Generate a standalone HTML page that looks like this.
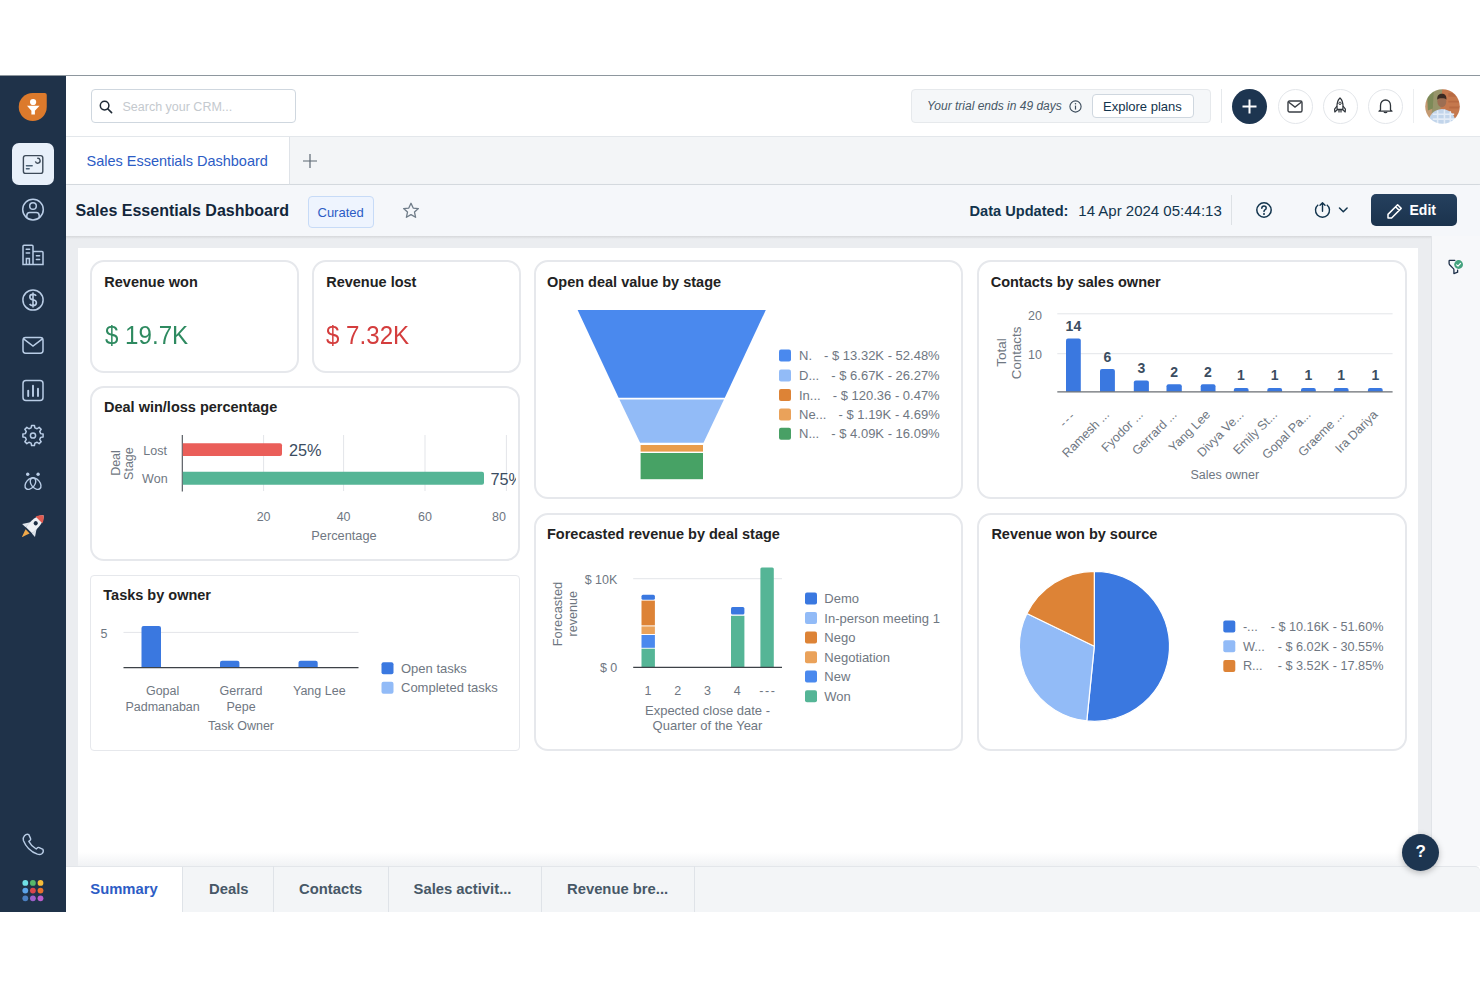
<!DOCTYPE html>
<html><head><meta charset="utf-8">
<style>
*{box-sizing:border-box;margin:0;padding:0}
html,body{width:1480px;height:987px;overflow:hidden;background:#fff;font-family:"Liberation Sans",sans-serif;color:#12344d}
.a{position:absolute}
.t{position:absolute;white-space:nowrap;line-height:1}
.card{position:absolute;border:2px solid #e6e8ec;border-radius:14px;background:#fff}
.ct{position:absolute;font-size:14.5px;font-weight:700;color:#222;line-height:1;white-space:nowrap}
svg{position:absolute;overflow:visible}
</style></head><body>
<!-- top line -->
<div class="a" style="left:0;top:75px;width:1480px;height:1px;background:#8e979e"></div>
<!-- sidebar -->
<div class="a" style="left:0;top:76px;width:66px;height:836px;background:#1f3249"></div>
<!-- header -->
<div class="a" style="left:66px;top:76px;width:1414px;height:61px;background:#fff;border-bottom:1px solid #e3e7eb"></div>
<!-- tab row -->
<div class="a" style="left:66px;top:137px;width:1414px;height:48px;background:#f3f5f7;border-bottom:1px solid #d9dee3"></div>
<div class="a" style="left:66px;top:137px;width:224px;height:48px;background:#fff;border-right:1px solid #dfe3e8;border-bottom:1px solid #d9dee3"></div>
<!-- title row -->
<div class="a" style="left:66px;top:185px;width:1414px;height:51px;background:#f5f7fa;box-shadow:0 1px 3px rgba(0,0,0,.12)"></div>
<!-- content gray -->
<div class="a" style="left:66px;top:236px;width:1365px;height:630px;background:#ebedf0"></div>
<div class="a" style="left:66px;top:236px;width:1414px;height:3px;background:linear-gradient(rgba(0,0,0,.09),rgba(0,0,0,0))"></div>
<!-- white panel -->
<div class="a" style="left:78px;top:248px;width:1340px;height:618px;background:#fff"></div>
<div class="a" style="left:78px;top:852px;width:1340px;height:14px;background:linear-gradient(rgba(236,238,241,0),rgba(236,238,241,.75))"></div>
<!-- right panel -->
<div class="a" style="left:1431px;top:236px;width:49px;height:630px;background:#f7f8fa;border-left:1px solid #e1e4e8"></div>
<!-- bottom tabs -->
<div class="a" style="left:66px;top:866px;width:1414px;height:46px;background:#f3f5f7;border-top:1px solid #e3e6ea;border-top-right-radius:5px"></div>

<!-- ===== HEADER CONTENT ===== -->
<div class="a" style="left:91px;top:89px;width:205px;height:34px;border:1px solid #cfd7df;border-radius:4px;background:#fff"></div>
<svg style="left:99px;top:100px" width="14" height="14" viewBox="0 0 14 14"><circle cx="5.6" cy="5.6" r="4.3" fill="none" stroke="#1f2a36" stroke-width="1.5"/><line x1="8.7" y1="8.7" x2="12.6" y2="12.6" stroke="#1f2a36" stroke-width="1.6" stroke-linecap="round"/></svg>
<div class="t" style="left:122.5px;top:101px;font-size:12.5px;color:#c4c9ce">Search your CRM...</div>

<div class="a" style="left:911px;top:89px;width:300px;height:34px;border:1px solid #e6e9ec;border-radius:4px;background:#f5f7f9"></div>
<div class="t" style="left:927px;top:100px;font-size:12px;font-style:italic;color:#475867">Your trial ends in 49 days</div>
<svg style="left:1069px;top:100px" width="13" height="13" viewBox="0 0 13 13"><circle cx="6.5" cy="6.5" r="5.6" fill="none" stroke="#3b4b5b" stroke-width="1.1"/><line x1="6.5" y1="5.6" x2="6.5" y2="9.6" stroke="#3b4b5b" stroke-width="1.2"/><circle cx="6.5" cy="3.7" r=".75" fill="#3b4b5b"/></svg>
<div class="a" style="left:1092px;top:94px;width:102px;height:24px;border:1px solid #cfd7df;border-radius:4px;background:#fff"></div>
<div class="t" style="left:1103px;top:100px;font-size:13px;color:#12344d">Explore plans</div>
<div class="a" style="left:1221px;top:89px;width:1px;height:34px;background:#e6e9ec"></div>

<div class="a" style="left:1232px;top:88.5px;width:35px;height:35px;border-radius:50%;background:#1d3550"></div>
<svg style="left:1242px;top:98.5px" width="15" height="15" viewBox="0 0 15 15"><path d="M7.5 0.5V14.5M0.5 7.5H14.5" stroke="#fff" stroke-width="2"/></svg>
<div class="a" style="left:1277.5px;top:88.5px;width:35px;height:35px;border-radius:50%;background:#fff;border:1px solid #e3e6ea"></div>
<svg style="left:1287px;top:100px" width="16" height="13" viewBox="0 0 16 13"><rect x="1" y="1" width="14" height="11" rx="1.5" fill="none" stroke="#3a3f45" stroke-width="1.4"/><path d="M1.5 2L8 7L14.5 2" fill="none" stroke="#3a3f45" stroke-width="1.4"/></svg>
<div class="a" style="left:1322.5px;top:88.5px;width:35px;height:35px;border-radius:50%;background:#fff;border:1px solid #e3e6ea"></div>
<svg style="left:1332px;top:97px" width="16" height="17" viewBox="0 0 16 17"><path d="M8 1C5.6 3 4.8 6 5 10.5L5.2 12.5H10.8L11 10.5C11.2 6 10.4 3 8 1Z" fill="none" stroke="#2f353b" stroke-width="1.3" stroke-linejoin="round"/><circle cx="8" cy="6.3" r="1.2" fill="none" stroke="#2f353b" stroke-width="1"/><path d="M5 9L2.6 12.2L2.8 15L5.4 12.6M11 9L13.4 12.2L13.2 15L10.6 12.6M7 13V15.5M9 13V15.5" fill="none" stroke="#2f353b" stroke-width="1.2" stroke-linejoin="round"/></svg>
<div class="a" style="left:1368px;top:88.5px;width:35px;height:35px;border-radius:50%;background:#fff;border:1px solid #e3e6ea"></div>
<svg style="left:1377px;top:98px" width="17" height="16" viewBox="0 0 17 16"><path d="M3.5 12V7.5C3.5 4.3 5.6 2 8.5 2C11.4 2 13.5 4.3 13.5 7.5V12L15 13.2H2L3.5 12Z" fill="none" stroke="#2f353b" stroke-width="1.3" stroke-linejoin="round"/><path d="M7 13.8C7.3 14.8 9.7 14.8 10 13.8" fill="none" stroke="#2f353b" stroke-width="1.2"/></svg>
<div class="a" style="left:1413px;top:89px;width:1px;height:34px;background:#eceef0"></div>
<svg style="left:1424.5px;top:88.7px" width="35" height="35" viewBox="0 0 36 36"><defs><clipPath id="av"><circle cx="18" cy="18" r="17.8"/></clipPath><filter id="avb" x="-10%" y="-10%" width="120%" height="120%"><feGaussianBlur stdDeviation="0.7"/></filter></defs><g clip-path="url(#av)"><g filter="url(#avb)"><rect x="-2" y="-2" width="40" height="40" fill="#c5784d"/><path d="M-2 -2H18L16 20L-2 30Z" fill="#97946a"/><path d="M-2 10H8L6 36H-2Z" fill="#c49a72"/><path d="M2 4L9 2L8 20L3 22Z" fill="#7d8a58"/><path d="M24 4H38V8H24ZM24 12H38V14H24ZM25 18H38V20H25Z" fill="#b86a42"/><ellipse cx="17.3" cy="12.6" rx="4.6" ry="6.2" fill="#9c6e52"/><path d="M12.6 11C12.4 6.6 14.6 5 17.4 5C20.4 5 22.4 6.8 22 11C21 9 14 9 12.6 11Z" fill="#3b2a22"/><path d="M3 38C4 26 8 21.5 17.5 20.5C27 21.5 31 26 32 38Z" fill="#c2d5eb"/><path d="M8 26H30M8 31H31M13 22V36M20 21V36M26 23V36" stroke="#e3ecf7" stroke-width="1.6"/></g></g></svg>

<!-- ===== SIDEBAR ICONS ===== -->
<svg style="left:0;top:76px" width="66" height="836" viewBox="0 76 66 836">
 <!-- logo -->
 <path d="M32.75 93H44.75Q46.75 93 46.75 95V107A14 14 0 1 1 32.75 93Z" fill="#dc7a2c"/>
 <circle cx="33.1" cy="102" r="3.1" fill="#fff"/>
 <path d="M27 105.8H39.6L34.9 110.8V114.5H31.4V110.8Z" fill="#fff"/>
 <!-- active item -->
 <rect x="12" y="143" width="42" height="42" rx="7" fill="#e8f0fa"/>
 <rect x="23.4" y="155.6" width="19.4" height="17.8" rx="2.2" fill="none" stroke="#3d4a59" stroke-width="1.4"/>
 <path d="M26.4 165.8H32.2M26.4 168.8H29.2" stroke="#4a6075" stroke-width="1.4" stroke-linecap="round"/>
 <path d="M35.4 161.4A2.4 2.4 0 1 0 37.2 158.4" fill="none" stroke="#3d4a59" stroke-width="1.4"/>
 <g fill="none" stroke="#b9cde6" stroke-width="1.5">
 <!-- contacts -->
 <circle cx="33" cy="209.6" r="10.3"/>
 <circle cx="33" cy="206" r="3.3"/>
 <path d="M26.8 217.2V215.8Q26.8 212.6 29.8 212.6H36.2Q39.2 212.6 39.2 215.8V217.2"/>
 <!-- building -->
 <path d="M23 264.4V246.2Q23 245.2 24 245.2H32Q33 245.2 33 246.2V264.4ZM33 251.6H42Q43 251.6 43 252.6V264.4H22.6"/>
 <path d="M26.2 249.2H29.6M26.2 253H29.6M36.4 255.8H39.6M36.4 259.6H39.6" stroke-linecap="round"/>
 <path d="M26.4 264.4V258.4H29.4V264.4"/>
 <!-- dollar -->
 <circle cx="33" cy="300" r="10.1"/>
 <path d="M36.2 295.8Q35.2 294.4 33 294.4Q29.8 294.4 29.8 296.9Q29.8 299.2 33 299.7Q36.4 300.3 36.4 302.8Q36.4 305.6 33 305.6Q30.6 305.6 29.6 304M33 292.6V307.4" stroke-width="1.6"/>
 <!-- mail -->
 <rect x="23" y="337.6" width="20" height="15.6" rx="2.6"/>
 <path d="M23.6 338.8L33 346L42.4 338.8"/>
 <!-- report -->
 <rect x="23" y="380.5" width="20" height="20" rx="3"/>
 <path d="M28.2 396V390.6M33 396V385.8M38 396V388.8" stroke-width="1.9" stroke-linecap="round"/>
 <!-- gear -->
 <path d="M31.12 427.83 L31.58 425.40 L34.42 425.40 L34.88 427.83 L37.10 428.75 L39.14 427.35 L41.15 429.36 L39.75 431.40 L40.67 433.62 L43.10 434.08 L43.10 436.92 L40.67 437.38 L39.75 439.60 L41.15 441.64 L39.14 443.65 L37.10 442.25 L34.88 443.17 L34.42 445.60 L31.58 445.60 L31.12 443.17 L28.90 442.25 L26.86 443.65 L24.85 441.64 L26.25 439.60 L25.33 437.38 L22.90 436.92 L22.90 434.08 L25.33 433.62 L26.25 431.40 L24.85 429.36 L26.86 427.35 L28.90 428.75Z" stroke-linejoin="round" stroke-width="1.5"/>
 <circle cx="33" cy="435.5" r="2.6"/>
 <!-- freddy -->
 <ellipse cx="30.4" cy="483.6" rx="4.3" ry="6.6" transform="rotate(40 30.4 483.6)" stroke-width="1.4"/>
 <ellipse cx="35.6" cy="483.6" rx="4.3" ry="6.6" transform="rotate(-40 35.6 483.6)" stroke-width="1.4"/>
 </g>
 <circle cx="27.7" cy="474.2" r="1.7" fill="#b9cde6"/>
 <circle cx="38.1" cy="474.2" r="1.7" fill="#b9cde6"/>
 <!-- rocket -->
 <g transform="translate(33.5 525.5) rotate(45) scale(1.3)">
  <path d="M0 -11C3.6 -8 4 -2 3.4 5H-3.4C-4 -2 -3.6 -8 0 -11Z" fill="#eef1f5"/>
  <path d="M0 -11C2.4 -9 3.2 -7.4 3.6 -6H-3.6C-3.2 -7.4 -2.4 -9 0 -11Z" fill="#e05a50"/>
  <circle cx="0" cy="-2.4" r="1.6" fill="#1e2f45"/>
  <path d="M-3.4 0L-7 5.4L-3.4 5.2ZM3.4 0L7 5.4L3.4 5.2Z" fill="#dde3ea"/>
  <path d="M-2.2 6.4Q0 12.6 0 12.6Q0 12.6 2.2 6.4Z" fill="#f0a94a"/>
 </g>
 <!-- phone -->
 <path d="M24.5 835.8Q26.5 833.6 28.8 834.6L30.6 838.6Q31 839.8 29.8 840.6L28.8 841.4Q31.4 846.4 36.2 849L37.2 848Q38 847 39.2 847.6L43 849.4Q44 851.8 41.8 853.8Q40.2 855 37.4 854.2Q27.4 850.4 23.4 840.4Q22.8 837.6 24.5 835.8Z" fill="none" stroke="#b9cde6" stroke-width="1.4" stroke-linejoin="round"/>
 <!-- apps -->
 <circle cx="25.3" cy="882.9" r="2.9" fill="#6fe0e8"/><circle cx="32.9" cy="882.9" r="2.9" fill="#58b86a"/><circle cx="40.5" cy="882.9" r="2.9" fill="#f5bd3a"/>
 <circle cx="25.3" cy="890.6" r="2.9" fill="#5ca4ea"/><circle cx="32.9" cy="890.6" r="2.9" fill="#d9464c"/><circle cx="40.5" cy="890.6" r="2.9" fill="#e9712d"/>
 <circle cx="25.3" cy="898.3" r="2.9" fill="#4b80c2"/><circle cx="32.9" cy="898.3" r="2.9" fill="#9c60ca"/><circle cx="40.5" cy="898.3" r="2.9" fill="#bb5ecb"/>
</svg>

<!-- ===== CARDS ===== -->
<div class="card" style="left:90px;top:260px;width:208.5px;height:112.5px"></div>
<div class="card" style="left:312px;top:260px;width:208.5px;height:112.5px"></div>
<div class="card" style="left:90px;top:386px;width:430px;height:174.5px"></div>
<div class="card" style="left:90px;top:574.5px;width:430px;height:176px;border-radius:4px;border-width:1.5px"></div>
<div class="card" style="left:533.5px;top:260px;width:429px;height:238.5px"></div>
<div class="card" style="left:533.5px;top:512.5px;width:429px;height:238px"></div>
<div class="card" style="left:977px;top:260px;width:429.5px;height:238.5px"></div>
<div class="card" style="left:977px;top:512.5px;width:429.5px;height:238px"></div>

<div class="ct" style="left:104.3px;top:274.6px">Revenue won</div>
<div class="ct" style="left:326.2px;top:274.6px">Revenue lost</div>
<div class="ct" style="left:104px;top:400.2px">Deal win/loss percentage</div>
<div class="ct" style="left:103.3px;top:588px">Tasks by owner</div>
<div class="ct" style="left:547px;top:274.8px">Open deal value by stage</div>
<div class="ct" style="left:990.7px;top:274.9px">Contacts by sales owner</div>
<div class="ct" style="left:547px;top:526.8px">Forecasted revenue by deal stage</div>
<div class="ct" style="left:991.4px;top:526.6px">Revenue won by source</div>

<div class="t" style="left:104.6px;top:322px;font-size:26.5px;color:#2e8a60;transform:scaleX(0.91);transform-origin:0 0">$ 19.7K</div>
<div class="t" style="left:326.4px;top:322px;font-size:26.5px;color:#d43d3d;transform:scaleX(0.91);transform-origin:0 0">$ 7.32K</div>

<!-- ===== CHARTS ===== -->
<svg style="left:0;top:0" width="1480" height="987" viewBox="0 0 1480 987" font-family="Liberation Sans, sans-serif">
<defs><clipPath id="c1"><rect x="92" y="388" width="424" height="170"/></clipPath></defs>
<!-- Deal win/loss -->
<g fill="#6f7782" font-size="12.5">
 <text transform="translate(120 463) rotate(-90)" text-anchor="middle">Deal</text>
 <text transform="translate(132.5 463.6) rotate(-90)" text-anchor="middle">Stage</text>
 <text x="167" y="454.5" text-anchor="end">Lost</text>
 <text x="167.6" y="483.3" text-anchor="end">Won</text>
 <text x="263.6" y="520.5" text-anchor="middle">20</text>
 <text x="343.6" y="520.5" text-anchor="middle">40</text>
 <text x="425" y="520.5" text-anchor="middle">60</text>
 <text x="506" y="520.5" text-anchor="end">80</text>
 <text x="344" y="539.8" text-anchor="middle" font-size="12.8">Percentage</text>
</g>
<g stroke="#e3e5e9" stroke-width="1">
 <line x1="263.6" y1="435" x2="263.6" y2="491"/><line x1="343.6" y1="435" x2="343.6" y2="491"/><line x1="425" y1="435" x2="425" y2="491"/><line x1="506.4" y1="435" x2="506.4" y2="491"/>
</g>
<line x1="182.3" y1="435" x2="182.3" y2="491.5" stroke="#4a4f55" stroke-width="1.1"/>
<path d="M182.8 443.3H280Q282 443.3 282 445.3V454Q282 456 280 456H182.8Z" fill="#ea5e59"/>
<path d="M182.8 471.7H482Q484 471.7 484 473.7V482.8Q484 484.8 482 484.8H182.8Z" fill="#55b596"/>
<g clip-path="url(#c1)" fill="#3b4d61" font-size="16.3">
 <text x="289" y="455.8">25%</text>
 <text x="490.4" y="484.6">75%</text>
</g>

<!-- Tasks by owner -->
<g fill="#6f7782" font-size="12.5">
 <text x="107.5" y="637.5" text-anchor="end">5</text>
 <text x="162.6" y="695" text-anchor="middle">Gopal</text>
 <text x="162.6" y="710.5" text-anchor="middle">Padmanaban</text>
 <text x="241" y="695" text-anchor="middle">Gerrard</text>
 <text x="241" y="710.5" text-anchor="middle">Pepe</text>
 <text x="319.3" y="695" text-anchor="middle">Yang Lee</text>
 <text x="241" y="730.2" text-anchor="middle">Task Owner</text>
 <text x="401" y="672.6" font-size="13">Open tasks</text>
 <text x="401" y="692.2" font-size="13">Completed tasks</text>
</g>
<line x1="123.5" y1="632.4" x2="358.5" y2="632.4" stroke="#e3e5e9" stroke-width="1"/>
<g fill="#3a78e0">
 <path d="M141.5 667.6V628Q141.5 625.9 143.6 625.9H158.9Q161 625.9 161 628V667.6Z"/>
 <path d="M220 667.6V662.8Q220 660.7 222.1 660.7H237.3Q239.4 660.7 239.4 662.8V667.6Z"/>
 <path d="M298.5 667.6V662.8Q298.5 660.7 300.6 660.7H315.6Q317.7 660.7 317.7 662.8V667.6Z"/>
</g>
<line x1="123.5" y1="667.6" x2="358.5" y2="667.6" stroke="#3d4247" stroke-width="1.3"/>
<rect x="381.5" y="662.2" width="12" height="12" rx="2" fill="#3a78e0"/>
<rect x="381.5" y="681.8" width="12" height="12" rx="2" fill="#92bbf7"/>

<!-- Open deal value funnel -->
<path d="M577.6 310H765.8L724.8 397.8H618.6Z" fill="#4a89ee"/>
<path d="M619.4 399.6H724L703.5 442.8H640.1Z" fill="#92bbf7"/>
<rect x="640.6" y="445" width="62.4" height="6.6" fill="#e99d4c"/>
<rect x="640.6" y="453" width="62.4" height="26.2" fill="#47a265"/>
<rect x="779" y="349.5" width="12" height="12" rx="2" fill="#4a89ee"/>
<rect x="779" y="369.5" width="12" height="12" rx="2" fill="#92bbf7"/>
<rect x="779" y="389" width="12" height="12" rx="2" fill="#dd8336"/>
<rect x="779" y="408.4" width="12" height="12" rx="2" fill="#eaa25a"/>
<rect x="779" y="427.7" width="12" height="12" rx="2" fill="#48a065"/>
<g fill="#6f7782" font-size="13">
 <text x="799" y="360">N.</text><text x="939.7" y="360" text-anchor="end">- $ 13.32K - 52.48%</text>
 <text x="799" y="380">D...</text><text x="939.7" y="380" text-anchor="end">- $ 6.67K - 26.27%</text>
 <text x="799" y="399.5">In...</text><text x="939.7" y="399.5" text-anchor="end">- $ 120.36 - 0.47%</text>
 <text x="799" y="418.9">Ne...</text><text x="939.7" y="418.9" text-anchor="end">- $ 1.19K - 4.69%</text>
 <text x="799" y="438.2">N...</text><text x="939.7" y="438.2" text-anchor="end">- $ 4.09K - 16.09%</text>
</g>

<!-- Contacts by sales owner -->
<g stroke="#e3e5e9" stroke-width="1">
 <line x1="1057.3" y1="313.8" x2="1392.6" y2="313.8"/><line x1="1057.3" y1="353.7" x2="1392.6" y2="353.7"/>
</g>
<g fill="#3a78e0">
 <path d="M1066 391.8V340.6Q1066 338.6 1068 338.6H1078.8Q1080.8 338.6 1080.8 340.6V391.8Z"/>
 <path d="M1100 391.8V371Q1100 369 1102 369H1112.9Q1114.9 369 1114.9 371V391.8Z"/>
 <path d="M1133.8 391.8V382.4Q1133.8 380.4 1135.8 380.4H1146.9Q1148.9 380.4 1148.9 382.4V391.8Z"/>
 <path d="M1166.5 391.8V386.2Q1166.5 384.2 1168.5 384.2H1179.8Q1181.8 384.2 1181.8 386.2V391.8Z"/>
 <path d="M1200.7 391.8V386.2Q1200.7 384.2 1202.7 384.2H1213.5Q1215.5 384.2 1215.5 386.2V391.8Z"/>
 <path d="M1233.8 391.8V390Q1233.8 388 1235.8 388H1246.6Q1248.6 388 1248.6 390V391.8Z"/>
 <path d="M1267.3 391.8V390Q1267.3 388 1269.3 388H1280.1Q1282.1 388 1282.1 390V391.8Z"/>
 <path d="M1301 391.8V390Q1301 388 1303 388H1313.8Q1315.8 388 1315.8 390V391.8Z"/>
 <path d="M1333.8 391.8V390Q1333.8 388 1335.8 388H1346.6Q1348.6 388 1348.6 390V391.8Z"/>
 <path d="M1367.9 391.8V390Q1367.9 388 1369.9 388H1380.7Q1382.7 388 1382.7 390V391.8Z"/>
</g>
<line x1="1057.3" y1="391.8" x2="1392.6" y2="391.8" stroke="#6a6e73" stroke-width="1.3"/>
<g fill="#3b4d61" font-size="14" font-weight="700" text-anchor="middle">
 <text x="1073.4" y="331.1">14</text><text x="1107.3" y="361.5">6</text><text x="1141.3" y="373.1">3</text>
 <text x="1174.1" y="377.3">2</text><text x="1208" y="377.3">2</text><text x="1240.9" y="380.4">1</text>
 <text x="1274.7" y="380.4">1</text><text x="1308.4" y="380.4">1</text><text x="1341.2" y="380.4">1</text><text x="1375.3" y="380.4">1</text>
</g>
<g fill="#6f7782" font-size="12.5">
 <text x="1042" y="319.9" text-anchor="end">20</text>
 <text x="1042" y="358.8" text-anchor="end">10</text>
 <text transform="translate(1006 352.5) rotate(-90)" text-anchor="middle" font-size="13.5">Total</text>
 <text transform="translate(1021 352.9) rotate(-90)" text-anchor="middle" font-size="13.3">Contacts</text>
 <text x="1224.8" y="478.5" text-anchor="middle">Sales owner</text>
 <g text-anchor="end">
 <text transform="translate(1076.5 415.8) rotate(-45)" letter-spacing="1.6">---</text>
 <text transform="translate(1110 415.4) rotate(-45)">Ramesh ...</text>
 <text transform="translate(1143.8 415.4) rotate(-45)">Fyodor ...</text>
 <text transform="translate(1177.5 415.4) rotate(-45)">Gerrard ...</text>
 <text transform="translate(1211 415.4) rotate(-45)">Yang Lee</text>
 <text transform="translate(1244.5 415.4) rotate(-45)">Divya Ve...</text>
 <text transform="translate(1278 415.4) rotate(-45)">Emily St...</text>
 <text transform="translate(1311.5 415.4) rotate(-45)">Gopal Pa...</text>
 <text transform="translate(1345 415.4) rotate(-45)">Graeme ...</text>
 <text transform="translate(1378.5 415.4) rotate(-45)">Ira Dariya</text>
 </g>
</g>

<!-- Forecasted revenue -->
<line x1="633.2" y1="578.7" x2="782" y2="578.7" stroke="#e3e5e9" stroke-width="1"/>
<rect x="641.5" y="594.8" width="13.4" height="5" rx="1.5" fill="#3a78e0"/>
<rect x="641.5" y="600.6" width="13.4" height="24.8" fill="#dd8336"/>
<rect x="641.5" y="626.4" width="13.4" height="7.6" fill="#eaa25a"/>
<rect x="641.5" y="635" width="13.4" height="12.8" fill="#4a89ee"/>
<rect x="641.5" y="648.7" width="13.4" height="19" fill="#55b596"/>
<rect x="731" y="607" width="13.4" height="7.6" rx="1.5" fill="#3a78e0"/>
<rect x="731" y="615.8" width="13.4" height="52" fill="#55b596"/>
<rect x="760.4" y="567.4" width="13.4" height="100.3" rx="1.5" fill="#55b596"/>
<line x1="633.2" y1="667.4" x2="782" y2="667.4" stroke="#3d4247" stroke-width="1.3"/>
<g fill="#6f7782" font-size="12.5">
 <text x="617.3" y="583.8" text-anchor="end">$ 10K</text>
 <text x="617.3" y="672" text-anchor="end">$ 0</text>
 <text transform="translate(561.8 614) rotate(-90)" text-anchor="middle" font-size="12.9">Forecasted</text>
 <text transform="translate(577.4 613.8) rotate(-90)" text-anchor="middle" font-size="12.6">revenue</text>
 <text x="648" y="695.3" text-anchor="middle">1</text>
 <text x="677.8" y="695.3" text-anchor="middle">2</text>
 <text x="707.5" y="695.3" text-anchor="middle">3</text>
 <text x="737.2" y="695.3" text-anchor="middle">4</text>
 <text x="768" y="695.3" text-anchor="middle" letter-spacing="1.6">---</text>
 <text x="707.5" y="714.6" text-anchor="middle" font-size="13">Expected close date -</text>
 <text x="707.5" y="730.1" text-anchor="middle" font-size="13">Quarter of the Year</text>
 <g font-size="13">
 <text x="824.3" y="603.1">Demo</text>
 <text x="824.3" y="622.5">In-person meeting 1</text>
 <text x="824.3" y="642.1">Nego</text>
 <text x="824.3" y="661.7">Negotiation</text>
 <text x="824.3" y="681">New</text>
 <text x="824.3" y="700.7">Won</text>
 </g>
</g>
<rect x="805" y="592.6" width="12" height="12" rx="2" fill="#3a78e0"/>
<rect x="805" y="612" width="12" height="12" rx="2" fill="#92bbf7"/>
<rect x="805" y="631.6" width="12" height="12" rx="2" fill="#dd8336"/>
<rect x="805" y="651.2" width="12" height="12" rx="2" fill="#eaa25a"/>
<rect x="805" y="670.5" width="12" height="12" rx="2" fill="#4a89ee"/>
<rect x="805" y="690.2" width="12" height="12" rx="2" fill="#55b596"/>

<!-- Revenue won by source pie -->
<g stroke="#fff" stroke-width="1.2" stroke-linejoin="round">
 <path d="M1094.3 646.3V571.3A75 75 0 1 1 1086.8 720.9Z" fill="#3a78e0"/>
 <path d="M1094.3 646.3L1086.8 720.9A75 75 0 0 1 1026.9 613.5Z" fill="#92bbf7"/>
 <path d="M1094.3 646.3L1026.9 613.5A75 75 0 0 1 1094.3 571.3Z" fill="#dd8336"/>
</g>
<rect x="1223.3" y="620.6" width="12" height="12" rx="2" fill="#3a78e0"/>
<rect x="1223.3" y="640.3" width="12" height="12" rx="2" fill="#92bbf7"/>
<rect x="1223.3" y="659.9" width="12" height="12" rx="2" fill="#dd8336"/>
<g fill="#6f7782" font-size="12.7">
 <text x="1242.9" y="631.1">-...</text><text x="1383.5" y="631.1" text-anchor="end">- $ 10.16K - 51.60%</text>
 <text x="1242.9" y="650.8">W...</text><text x="1383.5" y="650.8" text-anchor="end">- $ 6.02K - 30.55%</text>
 <text x="1242.9" y="670.4">R...</text><text x="1383.5" y="670.4" text-anchor="end">- $ 3.52K - 17.85%</text>
</g>
</svg>

<!-- ===== TAB + TITLE ROW ===== -->
<div class="t" style="left:86.5px;top:153.5px;font-size:14.5px;color:#2c5cc5">Sales Essentials Dashboard</div>
<svg style="left:303px;top:154px" width="14" height="14" viewBox="0 0 14 14"><path d="M7 0V14M0 7H14" stroke="#5d6873" stroke-width="1.2"/></svg>

<div class="t" style="left:75.5px;top:202.8px;font-size:16px;font-weight:700;color:#12263a">Sales Essentials Dashboard</div>
<div class="a" style="left:308px;top:196px;width:66px;height:32px;border:1px solid #c7dbf7;border-radius:4px;background:#eef4fe"></div>
<div class="t" style="left:317.5px;top:205.5px;font-size:13px;color:#2c5cc5">Curated</div>
<svg style="left:402px;top:202px" width="18" height="17" viewBox="0 0 18 17"><path d="M9 1.3L11.2 6.1L16.4 6.6L12.5 10.1L13.6 15.3L9 12.6L4.4 15.3L5.5 10.1L1.6 6.6L6.8 6.1Z" fill="none" stroke="#6f7c88" stroke-width="1.3" stroke-linejoin="round"/></svg>

<div class="t" style="left:969.5px;top:203.5px;font-size:14.6px;font-weight:700;color:#12344d">Data Updated:</div>
<div class="t" style="left:1078.3px;top:203.2px;font-size:15px;color:#12344d">14 Apr 2024 05:44:13</div>
<div class="a" style="left:1231px;top:195px;width:1px;height:30px;background:#dde1e5"></div>
<svg style="left:1255px;top:201px" width="18" height="18" viewBox="0 0 18 18"><circle cx="9" cy="9" r="7.2" fill="none" stroke="#12344d" stroke-width="1.5"/><path d="M6.8 7.2Q6.8 4.9 9 4.9Q11.2 4.9 11.2 7Q11.2 8.3 9.9 8.9Q9 9.4 9 10.6" fill="none" stroke="#12344d" stroke-width="1.5" stroke-linecap="round"/><circle cx="9" cy="13" r="1" fill="#12344d"/></svg>
<svg style="left:1313px;top:201px" width="36" height="18" viewBox="0 0 36 18"><path d="M5.2 3.7A7 7 0 1 0 13.8 3.7" fill="none" stroke="#12344d" stroke-width="1.4"/><path d="M9.5 10.2V1.8M7 4.3L9.5 1.8L12 4.3" fill="none" stroke="#12344d" stroke-width="1.4" stroke-linecap="round" stroke-linejoin="round"/><path d="M26.5 7L30.3 10.8L34.1 7" fill="none" stroke="#12344d" stroke-width="1.5" stroke-linecap="round" stroke-linejoin="round"/></svg>
<div class="a" style="left:1370.5px;top:193.7px;width:86.7px;height:32.7px;border-radius:5px;background:linear-gradient(#25405e,#1b334d)"></div>
<svg style="left:1386px;top:203px" width="17" height="17" viewBox="0 0 17 17"><path d="M11.6 1.8L15.2 5.4L5.6 15H2V11.4Z M9.6 3.8L13.2 7.4" fill="none" stroke="#fff" stroke-width="1.5" stroke-linejoin="round"/></svg>
<div class="t" style="left:1409.5px;top:203.3px;font-size:14px;font-weight:700;color:#fff">Edit</div>

<!-- right panel icon -->
<svg style="left:1447px;top:259px" width="18" height="17" viewBox="0 0 18 17"><path d="M7.8 1.4H2.6Q2.1 1.4 2.1 2V4.6Q2.1 5.2 2.6 5.7L6.4 9.6Q6.9 10.1 6.9 10.8V14.6L10.6 13.2V11.2" fill="none" stroke="#1d2f48" stroke-width="1.3" stroke-linejoin="round" stroke-linecap="round"/><circle cx="11.6" cy="5.5" r="4.4" fill="#45a37f"/><path d="M9.6 5.9L11 7.1L13.5 4.4" fill="none" stroke="#fff" stroke-width="1.2" stroke-linecap="round" stroke-linejoin="round"/></svg>

<!-- ===== BOTTOM TABS ===== -->
<div class="a" style="left:66px;top:867px;width:117px;height:45px;background:#fff;border-right:1px solid #dfe3e8"></div>
<div class="t" style="left:90.3px;top:882px;font-size:14.8px;font-weight:700;color:#2c5cc5">Summary</div>
<div class="a" style="left:273px;top:866px;width:1px;height:46px;background:#dfe3e8"></div>
<div class="t" style="left:209px;top:882px;font-size:14.8px;font-weight:700;color:#475867">Deals</div>
<div class="a" style="left:387.5px;top:866px;width:1px;height:46px;background:#dfe3e8"></div>
<div class="t" style="left:299px;top:882px;font-size:14.8px;font-weight:700;color:#475867">Contacts</div>
<div class="a" style="left:540.5px;top:866px;width:1px;height:46px;background:#dfe3e8"></div>
<div class="t" style="left:413.6px;top:882px;font-size:14.8px;font-weight:700;color:#475867">Sales activit...</div>
<div class="a" style="left:694px;top:866px;width:1px;height:46px;background:#dfe3e8"></div>
<div class="t" style="left:567px;top:882px;font-size:14.8px;font-weight:700;color:#475867">Revenue bre...</div>

<!-- help fab -->
<div class="a" style="left:1402px;top:833.5px;width:37px;height:37px;border-radius:50%;background:#1d3550;box-shadow:0 2px 6px rgba(0,0,0,.25)"></div>
<div class="t" style="left:1415.6px;top:842.6px;font-size:17px;font-weight:700;color:#fff">?</div>

</body></html>
